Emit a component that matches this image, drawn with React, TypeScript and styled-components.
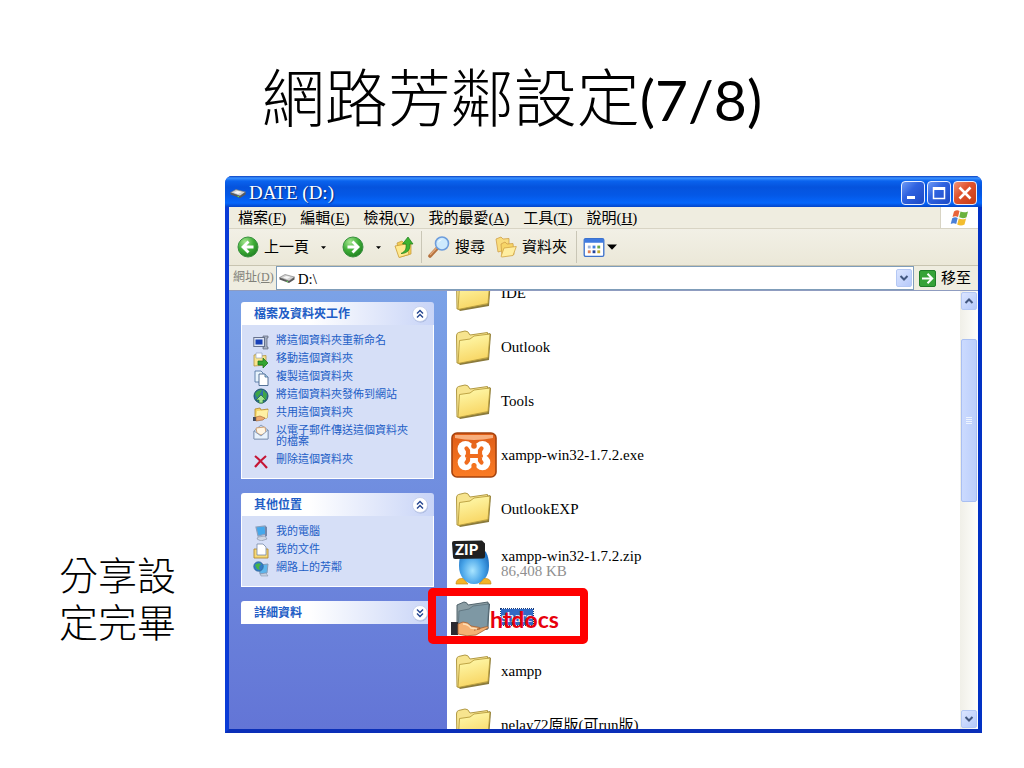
import React from "react";
import styled, { createGlobalStyle, css } from "styled-components";

const serif = `"Liberation Serif", "Noto Sans CJK TC", serif`;
const sans = `Lato, "Noto Sans CJK TC", sans-serif`;

const GlobalStyle = createGlobalStyle`
  *, *::before, *::after { box-sizing: border-box; }
  body { margin: 0; background: #fff; color: #000; }
  button, input { font: inherit; color: inherit; margin: 0; }
  svg { display: block; flex: none; }
`;

/* ---------- slide ---------- */

const Slide = styled.main`
  display: flex;
  flex-direction: column;
  height: 100vh;
  min-height: 560px;
  padding: 50px 42px 35px 0;
  font-family: ${sans};
`;

const SlideTitle = styled.h1`
  margin: 0 0 32px 42px;
  font-size: 63px;
  line-height: 94px;
  font-weight: 300;
  text-align: center;
`;

const PageCount = styled.span`
  font-size: 57px;
  line-height: 1;
  font-weight: 400;
`;

const SlideBody = styled.div`
  display: flex;
  flex: 1;
  min-height: 0;
`;

const Note = styled.p`
  flex: none;
  align-self: flex-end;
  width: 225px;
  margin: 0 0 87px;
  padding: 0 46px 0 59px;
  font-size: 39px;
  line-height: 47px;
  font-weight: 300;
`;

/* ---------- window frame ---------- */

const Window = styled.section`
  display: flex;
  flex-direction: column;
  flex: 1;
  min-width: 0;
  border: solid #0b3fd0;
  border-width: 0 4px 4px;
  border-color: #0a3bd6 #0231c4 #0a2fb8 #0a3bd6;
  border-radius: 7px 7px 0 0;
  background: #0855dd;
  font-family: ${serif};
  font-size: 15px;
`;

const TitleBar = styled.header`
  display: flex;
  align-items: center;
  gap: 3px;
  flex: none;
  height: 31px;
  margin: 0 -4px;
  padding: 3px 5px 0;
  border-radius: 7px 7px 0 0;
  background: linear-gradient(#0a3fc0 0, #3c93ff 2px, #0a63ee 5px, #0553dd 11px, #0458e6 19px, #0566fb 27px, #0344c8 31px);
  color: #fff;
`;

const WindowName = styled.h2`
  flex: 1;
  margin: 0;
  font-size: 19px;
  line-height: 24px;
  font-weight: 400;
  text-shadow: 1px 1px 1px #0a2a80;
`;

const CaptionButtons = styled.div`
  display: flex;
  gap: 2px;
`;

const CaptionButton = styled.button<{ $close?: boolean }>`
  display: grid;
  place-items: center;
  width: 24px;
  height: 24px;
  padding: 0;
  border: 1px solid #e8efff;
  border-radius: 4px;
  background: ${(p) =>
    p.$close
      ? "linear-gradient(135deg, #ee9478, #e0532f 40%, #c83c14)"
      : "linear-gradient(135deg, #6f9bf6, #2f62e0 40%, #1c49c4)"};
`;

const MenuBar = styled.nav`
  display: flex;
  flex: none;
  height: 22px;
  background: #efede0;
  border-bottom: 1px solid #d8d4c4;
`;

const MenuItems = styled.div`
  display: flex;
  flex: 1;
  gap: 14px;
  padding-left: 9px;
  border-right: 1px solid #d8d4c4;
`;

const PlainButton = styled.button`
  display: flex;
  align-items: center;
  padding: 0;
  border: 0;
  background: none;
  white-space: nowrap;
  line-height: 20px;
`;

const FlagCell = styled.div`
  display: grid;
  place-items: center;
  width: 37px;
  background: #fff;
`;

const ToolBar = styled.div`
  display: flex;
  align-items: center;
  flex: none;
  height: 37px;
  padding: 0 8px;
  background: linear-gradient(#f2f0e6, #ebe8d8);
  border-bottom: 1px solid #c8c4b0;
`;

const ToolButton = styled(PlainButton)<{ $gap?: number; $after?: number }>`
  gap: ${(p) => p.$gap ?? 5}px;
  margin-right: ${(p) => p.$after ?? 0}px;
`;

const Separator = styled.span<{ $after: number }>`
  width: 1px;
  height: 32px;
  margin-right: ${(p) => p.$after}px;
  background: #c9c6b6;
`;

const AddressBar = styled.form`
  display: flex;
  align-items: center;
  flex: none;
  height: 24px;
  padding-right: 7px;
  background: #efede0;
`;

const AddressLabel = styled.label`
  padding: 0 2px 2px 4px;
  font-size: 12px;
  line-height: 18px;
  color: #808078;
  white-space: nowrap;
`;

const AddressBox = styled.div`
  display: flex;
  align-items: center;
  flex: 1;
  height: 24px;
  padding: 0 1px 0 2px;
  gap: 3px;
  border: 1px solid #7f9db9;
  background: #fff;
`;

const AddressInput = styled.input`
  flex: 1;
  min-width: 0;
  padding: 2px 0 0;
  border: 0;
  outline: 0;
  background: none;
  line-height: 18px;
`;

const ArrowButton = styled.button`
  display: grid;
  place-items: center;
  flex: none;
  width: 16px;
  height: 18px;
  padding: 0;
  border: 1px solid #b4c8f4;
  border-radius: 2px;
  background: linear-gradient(135deg, #dbe5ff, #b5c9fa);
`;

const GoButton = styled(PlainButton)`
  gap: 5px;
  margin-left: 5px;
`;

/* ---------- client area ---------- */

const Client = styled.div`
  position: relative;
  display: flex;
  flex: 1;
  min-height: 0;
  background: #fff;
`;

const TaskPane = styled.aside`
  display: flex;
  flex-direction: column;
  gap: 14px;
  flex: none;
  width: 218px;
  padding: 11px 13px 0 12px;
  overflow: hidden;
  border-top: 1px solid #8f9cc0;
  background: linear-gradient(#7ba2e7, #6375d6);
`;

const PanelHeader = styled.button`
  display: flex;
  align-items: center;
  justify-content: space-between;
  width: 100%;
  height: 23px;
  padding: 0 5px 0 13px;
  border: 0;
  border-radius: 3px 3px 0 0;
  background: linear-gradient(90deg, #fff 0, #fff 35%, #c8d4f7);
  color: #215dc6;
  font-size: 12px;
  line-height: 16px;
  font-weight: 700;
`;

const TaskList = styled.ul`
  display: flex;
  flex-direction: column;
  gap: 7px;
  margin: 0;
  padding: 10px 18px 13px 11px;
  border: solid #fff;
  border-width: 0 1px 1px;
  background: #d6dff7;
  list-style: none;
`;

const TaskLink = styled.a`
  display: flex;
  gap: 7px;
  color: #215dc6;
  font-size: 11px;
  line-height: 11px;
  text-decoration: none;

  svg { margin: -1px 0 -4px; }
`;

const FileList = styled.ul`
  flex: 1;
  min-width: 0;
  margin: 0;
  padding: 0;
  overflow: hidden;
  border-top: 1px solid #8f9cc0;
  list-style: none;
`;

const FileRow = styled.li`
  display: flex;
  align-items: center;
  gap: 4px;
  height: 54px;
  padding-left: 4px;
  line-height: 16px;

  &:first-child { margin-top: -25px; }
`;

const FileIcon = styled.span`
  display: grid;
  place-items: center;
  width: 46px;
  height: 46px;
`;

const FileName = styled.span<{ $selected?: boolean }>`
  display: block;
  ${(p) =>
    p.$selected &&
    css`
      background: #316ac5;
      color: #fff;
      outline: 1px dotted #163a7a;
    `}
`;

const FileSize = styled.span`
  display: block;
  line-height: 14px;
  color: #909090;
`;

const ScrollBar = styled.div`
  display: flex;
  flex-direction: column;
  align-items: center;
  flex: none;
  width: 18px;
  padding: 1px 0;
  border-top: 1px solid #8f9cc0;
  background: linear-gradient(90deg, #f0efe8, #fefefb);
`;

const Track = styled.div`
  display: grid;
  grid-template-rows: 29fr 164fr 209fr;
  flex: 1;
  width: 100%;
`;

const Thumb = styled.div`
  display: grid;
  place-items: center;
  grid-row: 2;
  margin: 0 1px;
  border: 1px solid #a9bff2;
  border-radius: 2px;
  background: linear-gradient(90deg, #cbdafe, #bccffb);
`;

/* Red frame laid over the shared folder */
const Callout = styled.div`
  position: absolute;
  top: 298px;
  left: 199px;
  width: 160px;
  height: 56px;
  padding: 9px 0 0 54px;
  border: 8px solid #ff0000;
  border-radius: 5px;
  color: #e8000c;
  font-family: ${sans};
  font-size: 23px;
  line-height: 28px;
  font-weight: 700;
`;

/* ---------- drawings ---------- */

const Drive = () => (
  <svg width="16" height="16" viewBox="0 0 16 16" aria-hidden="true">
    <path d="M0.500 7.500 6 4.500 15.500 7 10 11Z" fill="#d2d2d2" stroke="#777" strokeWidth=".6" />
    <path d="M.5 7.500v2L10 13v-2ZM10 11 15.500 7v2.500L10 13Z" fill="#5a5a5a" />
    <path d="M4 7.500 7.500 6l4 1-3.500 2Z" fill="#f6f6f6" />
    <path d="M7.500 11.200 9 11.800" stroke="#5fe04f" />
  </svg>
);

const RoundArrow = ({ back }: { back?: boolean }) => (
  <svg width="22" height="22" viewBox="0 0 22 22" aria-hidden="true">
    <defs>
      <radialGradient id="ball" cx=".35" cy=".25" r=".85">
        <stop offset="0" stopColor="#a5e58f" />
        <stop offset=".5" stopColor="#3fae37" />
        <stop offset="1" stopColor="#1c7a1e" />
      </radialGradient>
    </defs>
    <circle cx="11" cy="11" r="10" fill="url(#ball)" stroke="#3a9140" />
    <path
      d={back ? "M11.500 5.500 6 11l5.500 5.500M6.500 11h10" : "M10.500 5.500 16 11l-5.500 5.500M15.500 11h-10"}
      fill="none" stroke="#fff" strokeWidth="2.800"
    />
  </svg>
);

const Caret = ({ size = 5 }: { size?: number }) => (
  <svg width={size} height={size} viewBox="0 0 10 10" aria-hidden="true">
    <path d="M0 2.500h10L5 7.800Z" fill="#000" />
  </svg>
);

const UpFolder = () => (
  <svg width="20" height="22" viewBox="0 0 20 22" aria-hidden="true">
    <path d="M3 7l5-2 2 2 7-1v12L6 21Z" fill="#f3cd55" stroke="#c9a040" strokeWidth=".8" />
    <path d="M1 10l11-2 3 10.500L5 21.500Z" fill="#ffe990" stroke="#c99c34" strokeWidth=".8" />
    <path d="M7 17.500c4.500-2 5.500-5 5-9.500H8.500L14 1l5 7h-3.200c.8 6-2.800 9.500-8.800 9.500Z" fill="#3db431" stroke="#1e7c1b" strokeWidth=".7" />
  </svg>
);

const Magnifier = () => (
  <svg width="22" height="22" viewBox="0 0 22 22" aria-hidden="true">
    <path d="M9 12.500 2 20" stroke="#b5713d" strokeWidth="3.600" strokeLinecap="round" />
    <path d="M8.500 12 2 19" stroke="#e4ab7b" strokeWidth="1.200" />
    <circle cx="14" cy="7.500" r="6.500" fill="#cdeafd" stroke="#6d9ddc" strokeWidth="1.600" />
    <path d="M10 7c.5-3 3-4 5-3.500-2 .5-3.500 1.500-5 3.500Z" fill="#fff" />
  </svg>
);

const TwoFolders = () => (
  <svg width="22" height="22" viewBox="0 0 22 22" aria-hidden="true">
    <path d="M1 3l5-2 2 2 6-.5V13L3 16Z" fill="#f9dc7c" stroke="#cfa048" strokeWidth=".8" />
    <path d="M6 8l4-2 2 2 6-.5 1 11L7 20Z" fill="#f7d567" stroke="#cfa048" strokeWidth=".8" />
    <path d="M6 20.500 9 12l12.300-1.500L18 19.500 7 21Z" fill="#ffeea0" stroke="#d2a543" strokeWidth=".8" />
  </svg>
);

const Views = () => (
  <svg width="22" height="19" viewBox="0 0 22 20" aria-hidden="true">
    <rect x=".7" y=".7" width="20.600" height="18.600" rx="1.500" fill="#fff" stroke="#3d72cc" strokeWidth="1.400" />
    <rect x="1" y="1" width="20" height="4" fill="#3f7be0" />
    <path d="M4.500 8h3v3h-3z" fill="#9fb6dc" /><path d="M9.500 8h3v3h-3z" fill="#4380e0" /><path d="M14.500 8h3v3h-3z" fill="#68a948" />
    <path d="M4.500 13h3v3h-3z" fill="#e08056" /><path d="M9.500 13h3v3h-3z" fill="#23439c" /><path d="M14.500 13h3v3h-3z" fill="#c0a92e" />
  </svg>
);

const Flag = () => (
  <svg width="19" height="18" viewBox="0 0 19 18" aria-hidden="true">
    <path d="M4 2.500c2-1.500 4-1.500 5.500-.5L8 8C6.500 7 4.500 7 2.500 8Z" fill="#e8633a" />
    <path d="M10.500 2.500c2 1 4.500 1.200 7.500 0L16.500 8.300c-2.500 1.200-5 1-7.300 0Z" fill="#6cb33e" />
    <path d="M2.200 9.200c2-1.200 4-1.200 5.500-.2L6.200 15c-1.700-1-3.700-1-5.500 0Z" fill="#4a80d8" />
    <path d="M8.800 9.500c2 1 4.500 1.200 7.300 0L14.500 15.500c-2.500 1.500-5 1.200-7.300 0Z" fill="#f3bd2e" />
  </svg>
);

const Chevron = ({ up }: { up?: boolean }) => (
  <svg width="10" height="8" viewBox="0 0 10 8" aria-hidden="true">
    <path d={up ? "M1.500 6 5 2.500 8.500 6" : "M1.500 2 5 5.500 8.500 2"} fill="none" stroke="#42577f" strokeWidth="2" />
  </svg>
);

const Collapse = ({ down }: { down?: boolean }) => (
  <svg width="18" height="18" viewBox="0 0 18 18" aria-hidden="true">
    <circle cx="9.500" cy="9.800" r="7.600" fill="#a9b8de" />
    <circle cx="9" cy="9" r="7.500" fill="#fff" stroke="#c2cdea" strokeWidth=".8" />
    <path
      d={down ? "M6 5.500l3 3 3-3M6 9.500l3 3 3-3" : "M6 8.500l3-3 3 3M6 12.500l3-3 3 3"}
      fill="none" stroke="#24458f" strokeWidth="1.400"
    />
  </svg>
);

const GoArrow = () => (
  <svg width="17" height="17" viewBox="0 0 17 17" aria-hidden="true">
    <rect x=".5" y=".5" width="16" height="16" rx="1.500" fill="#36a338" stroke="#1f7d28" />
    <path d="M3 8.500h10M8.500 3.800l4.700 4.700-4.700 4.700" fill="none" stroke="#fff" strokeWidth="2" />
  </svg>
);

const Folder = () => (
  <svg width="38" height="38" viewBox="0 0 38 38" aria-hidden="true">
    <defs>
      <linearGradient id="paper" x2=".3" y2="1">
        <stop offset="0" stopColor="#fffcb2" />
        <stop offset="1" stopColor="#f8d664" />
      </linearGradient>
    </defs>
    <path d="M34 5 36 6 34 32 5 37 3 35Z" fill="#8a7a3c" />
    <path d="M2 35 1.500 8Q1.500 5 3.500 4.500L10 3Q13 2.500 15 7L32.500 4.500V30Z" fill="#f7e48e" stroke="#b29a45" />
    <path d="M3 35.500 4.500 12.500 15 11 19 8 35 6 33 29.500Z" fill="url(#paper)" stroke="#b89d3c" strokeWidth=".9" />
  </svg>
);

const Xampp = () => (
  <svg width="46" height="46" viewBox="0 0 46 46" aria-hidden="true">
    <defs>
      <linearGradient id="orange" x2="0" y2="1">
        <stop offset="0" stopColor="#df5d18" />
        <stop offset="1" stopColor="#fb7c25" />
      </linearGradient>
    </defs>
    <rect x="1" y="1" width="44" height="44" rx="5" fill="url(#orange)" stroke="#a5430e" strokeWidth="1.600" />
    <path d="M4 3h38v3Q23 10 4 6Z" fill="#ffc9a0" opacity=".75" />
    <g fill="#fff">
      <circle cx="14.500" cy="17" r="8" />
      <circle cx="31.500" cy="17" r="8" />
      <circle cx="14.500" cy="30.500" r="7.800" />
      <circle cx="31.500" cy="30.500" r="7.800" />
      <path d="M14 16h18v15H14Z" />
    </g>
    <circle cx="23" cy="14" r="2.800" fill="#e9681d" />
    <circle cx="23" cy="33.500" r="2.600" fill="#f4741f" />
    <path d="M15.500 16.500l1.500 2v10l-1.500 2M30.500 16.500l-1.500 2v10l1.500 2M16 24h14" fill="none" stroke="#f06c1e" strokeWidth="4.200" strokeLinecap="round" strokeLinejoin="round" />
  </svg>
);

const Zip = () => (
  <svg width="46" height="46" viewBox="0 0 46 46" aria-hidden="true">
    <defs>
      <radialGradient id="egg" cx=".45" cy=".65" r=".65">
        <stop offset="0" stopColor="#a9e5ff" />
        <stop offset=".55" stopColor="#48a4e8" />
        <stop offset="1" stopColor="#1768ba" />
      </radialGradient>
    </defs>
    <path d="M23 6c12 0 15 10 15 20s-6 18-15 18S8 36 8 26 11 6 23 6Z" fill="url(#egg)" />
    <path d="M5 44q0-6 7-5.500l5 5.500ZM40 44q0-6-7-5.500L28 44Z" fill="#f3b526" stroke="#c98817" strokeWidth=".7" />
    <path d="M1 3q0-2 2-2l28-.5 3 3v13q0 2-2 2L4 19q-2 0-2-2Z" fill="#202020" />
    <text x="4" y="15" fill="#fff" fontFamily="Lato, sans-serif" fontSize="15" fontWeight="900">ZIP</text>
  </svg>
);

const SharedFolder = () => (
  <svg width="46" height="42" viewBox="0 0 46 42" aria-hidden="true">
    <path d="M37 7 39 8 37 33 8 37Z" fill="#40535e" />
    <path d="M6 36V9L13 6q3 0 4 3l20-3v27Z" fill="#8d9fa5" stroke="#52646d" />
    <path d="M7 36 8 15 18 13 22 10 38 8 36 33Z" fill="#7e98a4" stroke="#5a707b" strokeWidth=".8" />
    <path d="M0 26l7 0v13H0Z" fill="#2b2b32" />
    <path d="M7 28l5-2q5 0 8 4l6 1q4 0 3 2l-6 1 11-3q4-1 3 1l-12 7q-9 2-18-1Z" fill="#f5b174" stroke="#a55f31" strokeWidth=".8" />
    <path d="M12 28q5 0 8 4l6 1" fill="none" stroke="#ffe0b8" strokeWidth="1.500" />
  </svg>
);

type TaskKind = "rename" | "move" | "copy" | "publish" | "share" | "mail" | "delete" | "computer" | "documents" | "network";

const taskDrawings: Record<TaskKind, React.ReactNode> = {
  rename: (
    <>
      <path d="M10 2h5v2h-1v9h1v2h-5v-2h1V4h-1Z" fill="#a6b0c2" stroke="#5c6678" strokeWidth=".7" />
      <rect x=".8" y="3.500" width="10.700" height="9" fill="#dfe6f4" stroke="#66728e" />
      <rect x="2.500" y="5.500" width="7" height="5" fill="#1740b8" />
    </>
  ),
  move: (
    <>
      <path d="M1 3l5-1 1 2 6-.5V13L1 14Z" fill="#f8e38d" stroke="#b49543" strokeWidth=".8" />
      <path d="M3 1h6v5H3Z" fill="#fff" stroke="#8797b8" strokeWidth=".6" />
      <path d="M5 9h5V6l5 5-5 5v-3H5Z" fill="#34a531" stroke="#176b1b" strokeWidth=".7" />
    </>
  ),
  copy: (
    <>
      <path d="M2 1h6l2 2v9H2Z" fill="#e8f3fc" stroke="#5679a5" strokeWidth=".9" />
      <path d="M6 4h6l3 3v8.500H6Z" fill="#fff" stroke="#45658e" strokeWidth=".9" />
      <path d="M12 4v3h3" fill="#a8d4ee" stroke="#45658e" strokeWidth=".8" />
    </>
  ),
  publish: (
    <>
      <circle cx="8" cy="8" r="7" fill="#2f6fa8" stroke="#1d5560" />
      <path d="M2 6q2-4 7-4l-2 4-3 4ZM10 2l4 4-1 6-3-2Z" fill="#3fa645" />
      <path d="M8 7l5 5h-3v3H6v-3H3Z" fill="#a5e592" stroke="#20702a" strokeWidth=".7" />
    </>
  ),
  share: (
    <>
      <path d="M2 3l5-1 1 2 7-1-1 9-12 1Z" fill="#f6d466" stroke="#b0862e" strokeWidth=".8" />
      <path d="M4 5l11-1-1 8-11 1Z" fill="#fff0a3" />
      <path d="M0 11h3v4H0Z" fill="#424a60" />
      <path d="M3 11l4-1 5 2-2 2-7 1Z" fill="#efaa6e" stroke="#9d6132" strokeWidth=".6" />
    </>
  ),
  mail: (
    <>
      <path d="M1 7l7-6 7 5v9H1Z" fill="#c8d9ef" stroke="#7a8eac" strokeWidth=".8" />
      <path d="M3 4l9-1 1 6-5 2-4-2Z" fill="#fff5e2" stroke="#cc925d" strokeWidth=".8" />
      <path d="M1 7l7 5 7-6v9H1Z" fill="#e8f2fd" stroke="#7a8eac" strokeWidth=".8" />
    </>
  ),
  delete: <path d="M2 3q5 4 12 12M13 3Q7 8 2 14" fill="none" stroke="#c51636" strokeWidth="2.200" />,
  computer: (
    <>
      <path d="M3 2l9-1 1 8-8 2Z" fill="#45a8ec" stroke="#8ca0bd" strokeWidth="1.200" />
      <path d="M12 1l2 1v9l-2 1Z" fill="#7387ab" />
      <path d="M5 12l7-1 2 3-6 2-4-2Z" fill="#cfd7e4" stroke="#7f8ba3" strokeWidth=".6" />
    </>
  ),
  documents: (
    <>
      <path d="M1 6h14v9H1Z" fill="#f7d975" stroke="#b18b35" strokeWidth=".9" />
      <path d="M4 1h6l3 3v8H4Z" fill="#fff" stroke="#7689a8" strokeWidth=".8" />
    </>
  ),
  network: (
    <>
      <path d="M6 4l9-1-1 9-7 1Z" fill="#5db5ec" stroke="#849bb8" />
      <circle cx="5.500" cy="5.500" r="4.800" fill="#347cc6" stroke="#265f8b" strokeWidth=".6" />
      <path d="M2 4q3-3 6-1L6 6l1 3-3-1Z" fill="#47b547" />
      <path d="M7 13l6-1 2 3H8Z" fill="#c5d0e0" stroke="#778ba6" strokeWidth=".5" />
    </>
  ),
};

/* ---------- data ---------- */

const menus = [["檔案", "F"], ["編輯", "E"], ["檢視", "V"], ["我的最愛", "A"], ["工具", "T"], ["說明", "H"]];

const panels: { title: string; tasks: [TaskKind, string][] }[] = [
  {
    title: "檔案及資料夾工作",
    tasks: [
      ["rename", "將這個資料夾重新命名"],
      ["move", "移動這個資料夾"],
      ["copy", "複製這個資料夾"],
      ["publish", "將這個資料夾發佈到網站"],
      ["share", "共用這個資料夾"],
      ["mail", "以電子郵件傳送這個資料夾的檔案"],
      ["delete", "刪除這個資料夾"],
    ],
  },
  {
    title: "其他位置",
    tasks: [
      ["computer", "我的電腦"],
      ["documents", "我的文件"],
      ["network", "網路上的芳鄰"],
    ],
  },
  { title: "詳細資料", tasks: [] },
];

const files: { name: string; icon?: React.ReactNode; size?: string; selected?: boolean }[] = [
  { name: "IDE" },
  { name: "Outlook" },
  { name: "Tools" },
  { name: "xampp-win32-1.7.2.exe", icon: <Xampp /> },
  { name: "OutlookEXP" },
  { name: "xampp-win32-1.7.2.zip", icon: <Zip />, size: "86,408 KB" },
  { name: "share", icon: <SharedFolder />, selected: true },
  { name: "xampp" },
  { name: "nelay72原版(可run版)" },
];

export default function App() {
  return (
    <>
      <GlobalStyle />
      <Slide>
        <SlideTitle>
          網路芳鄰設定<PageCount>(7/8)</PageCount>
        </SlideTitle>
        <SlideBody>
          <Note>分享設定完畢</Note>
          <Window>
            <TitleBar>
              <Drive />
              <WindowName>DATE (D:)</WindowName>
              <CaptionButtons>
                <CaptionButton aria-label="最小化">
                  <svg width="16" height="16"><path d="M2 12.500h8" stroke="#fff" strokeWidth="3" /></svg>
                </CaptionButton>
                <CaptionButton aria-label="最大化">
                  <svg width="16" height="16"><path d="M2.500 2v11.500h11V2" fill="none" stroke="#fff" strokeWidth="1.500" /><path d="M2 3.500h12" stroke="#fff" strokeWidth="3" /></svg>
                </CaptionButton>
                <CaptionButton aria-label="關閉" $close>
                  <svg width="16" height="16"><path d="M2.500 2.500l11 11M13.500 2.500l-11 11" stroke="#fff" strokeWidth="2.600" /></svg>
                </CaptionButton>
              </CaptionButtons>
            </TitleBar>

            <MenuBar>
              <MenuItems>
                {menus.map(([label, key]) => (
                  <PlainButton key={key}>
                    {label}(<u>{key}</u>)
                  </PlainButton>
                ))}
              </MenuItems>
              <FlagCell><Flag /></FlagCell>
            </MenuBar>

            <ToolBar>
              <ToolButton $after={12}><RoundArrow back />上一頁</ToolButton>
              <ToolButton $after={16} aria-label="上一頁選單"><Caret /></ToolButton>
              <ToolButton $after={12} aria-label="下一頁"><RoundArrow /></ToolButton>
              <ToolButton $after={13} aria-label="下一頁選單"><Caret /></ToolButton>
              <ToolButton $after={7} aria-label="上移一層"><UpFolder /></ToolButton>
              <Separator $after={6} />
              <ToolButton $after={10}><Magnifier />搜尋</ToolButton>
              <ToolButton $after={9}><TwoFolders />資料夾</ToolButton>
              <Separator $after={6} />
              <ToolButton $gap={2} aria-label="檢視"><Views /><Caret size={10} /></ToolButton>
            </ToolBar>

            <AddressBar onSubmit={(e) => e.preventDefault()}>
              <AddressLabel htmlFor="address">網址(<u>D</u>)</AddressLabel>
              <AddressBox>
                <Drive />
                <AddressInput id="address" defaultValue="D:\" />
                <ArrowButton type="button" aria-label="網址清單"><Chevron /></ArrowButton>
              </AddressBox>
              <GoButton><GoArrow />移至</GoButton>
            </AddressBar>

            <Client>
              <TaskPane>
                {panels.map(({ title, tasks }) => (
                  <section key={title}>
                    <PanelHeader>
                      {title}
                      <Collapse down={tasks.length === 0} />
                    </PanelHeader>
                    {tasks.length > 0 && (
                      <TaskList>
                        {tasks.map(([kind, label]) => (
                          <li key={kind}>
                            <TaskLink href="#">
                              <svg width="16" height="16" viewBox="0 0 16 16" aria-hidden="true">{taskDrawings[kind]}</svg>
                              {label}
                            </TaskLink>
                          </li>
                        ))}
                      </TaskList>
                    )}
                  </section>
                ))}
              </TaskPane>
              <FileList>
                {files.map(({ name, icon, size, selected }) => (
                  <FileRow key={name}>
                    <FileIcon>{icon ?? <Folder />}</FileIcon>
                    <div>
                      <FileName $selected={selected}>{name}</FileName>
                      {size && <FileSize>{size}</FileSize>}
                    </div>
                  </FileRow>
                ))}
              </FileList>
              <ScrollBar>
                <ArrowButton aria-label="向上捲動"><Chevron up /></ArrowButton>
                <Track>
                  <Thumb>
                    <svg width="8" height="8"><path d="M1 1.500h6M1 3.500h6M1 5.500h6M1 7.500h6" stroke="#eef4fe" /></svg>
                  </Thumb>
                </Track>
                <ArrowButton aria-label="向下捲動"><Chevron /></ArrowButton>
              </ScrollBar>
              <Callout>htdocs</Callout>
            </Client>
          </Window>
        </SlideBody>
      </Slide>
    </>
  );
}
